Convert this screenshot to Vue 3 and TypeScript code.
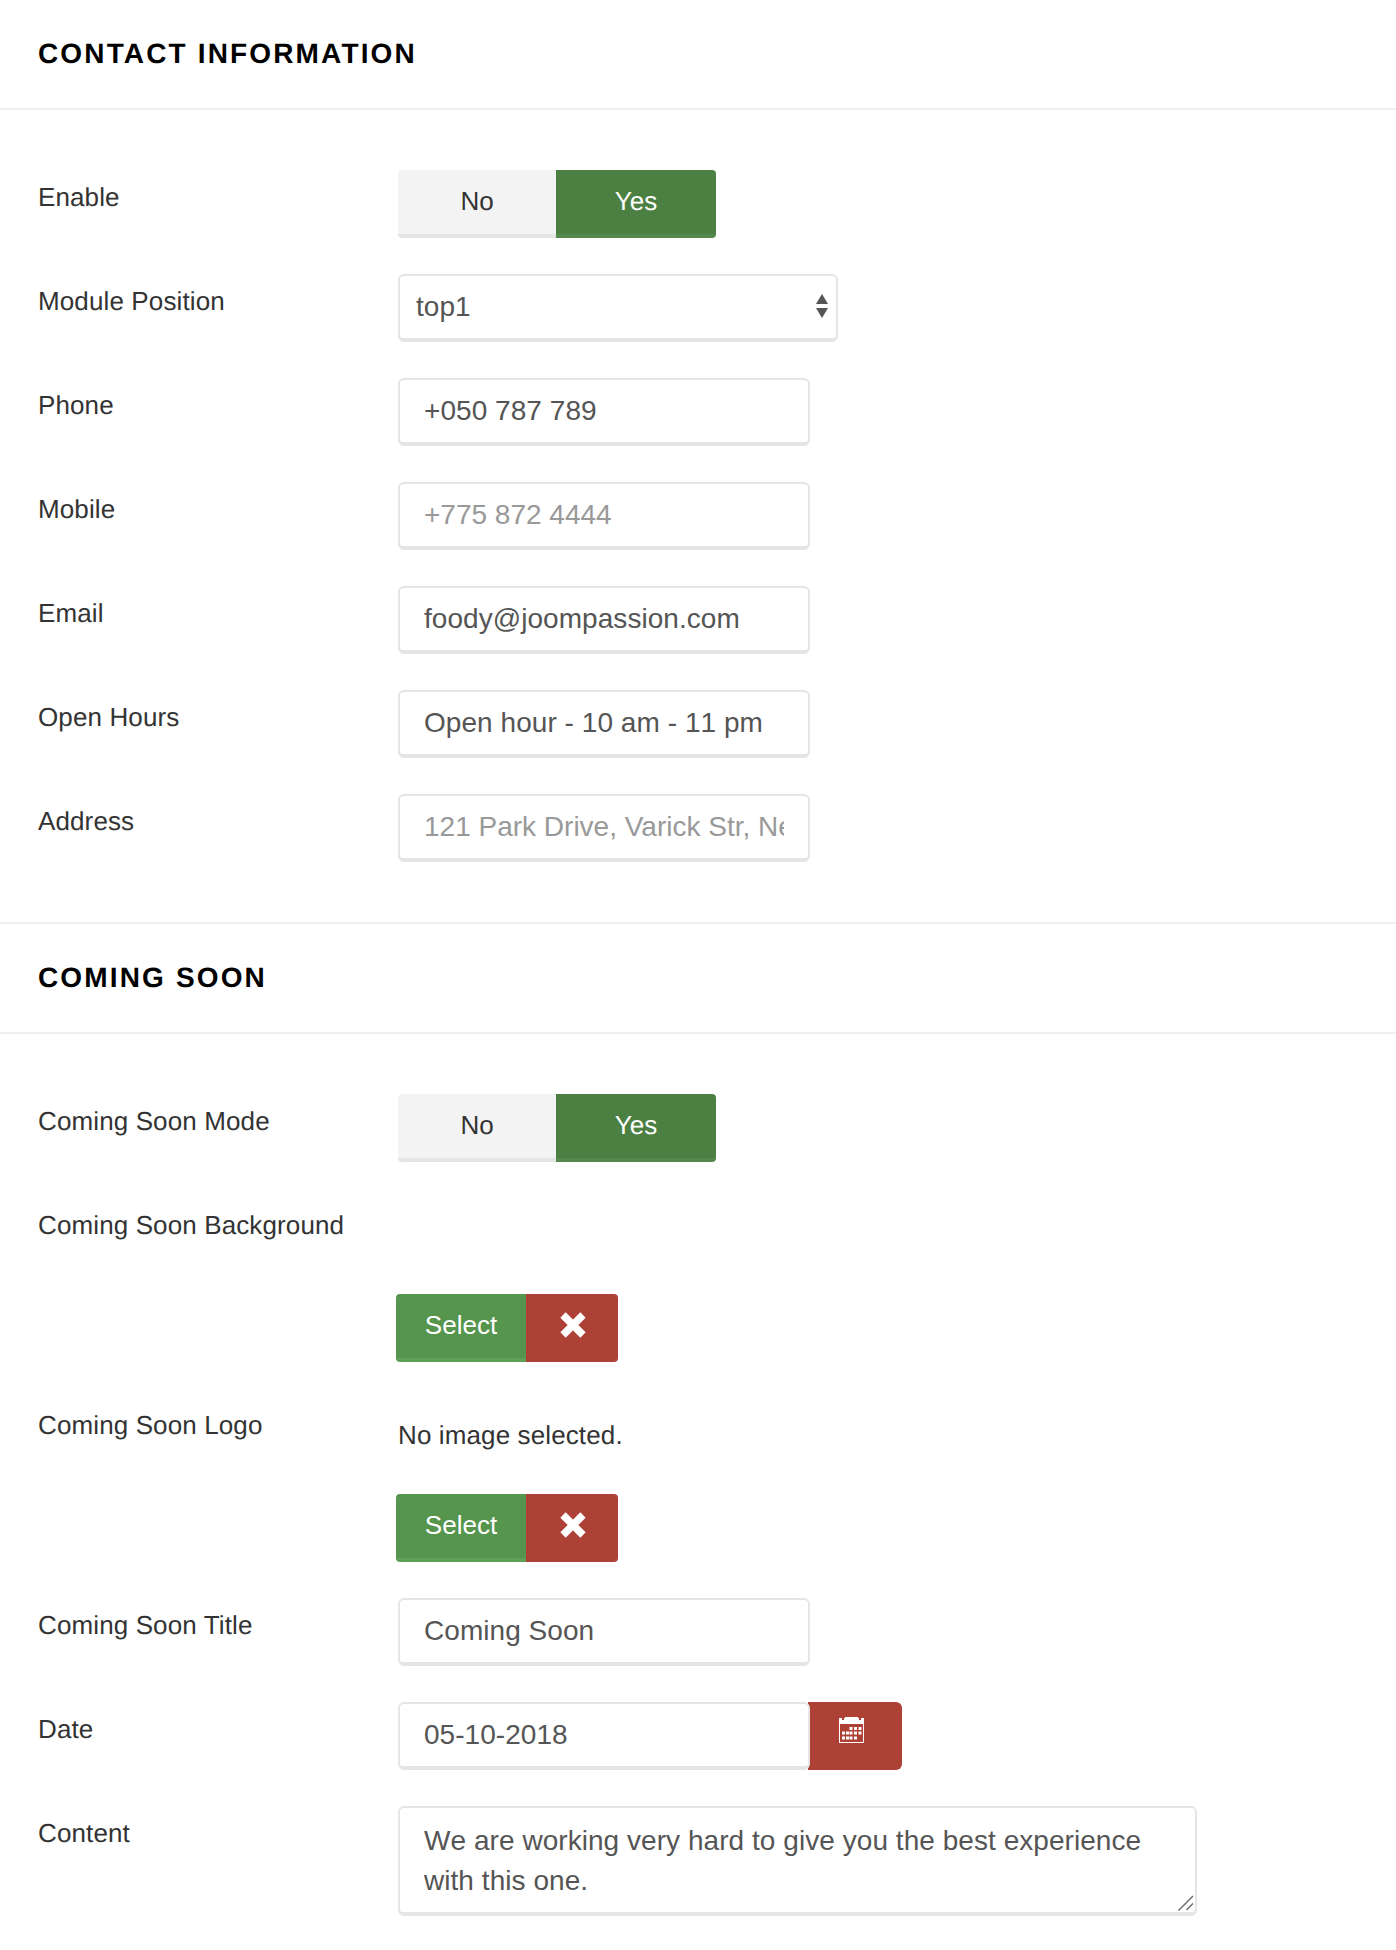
<script setup lang="ts">
interface Field { label: string; value?: string; placeholder?: string }
const contactFields: Field[] = [
  { label: 'Phone', value: '+050 787 789' },
  { label: 'Mobile', placeholder: '+775 872 4444' },
  { label: 'Email', value: 'foody@joompassion.com' },
  { label: 'Open Hours', value: 'Open hour - 10 am - 11 pm' },
  { label: 'Address', placeholder: '121 Park Drive, Varick Str, New York' },
]
const calendarCells: [number, number][] = [
  [10.5, 10], [15, 10], [19.5, 10],
  [3, 14.5], [7, 14.5], [10.5, 14.5], [15, 14.5], [19.5, 14.5],
  [3, 19.5], [7, 19.5], [10.5, 19.5], [15, 19.5],
]
</script>

<template>
  <main class="page">
    <section class="section">
      <h2 class="heading">CONTACT INFORMATION</h2>
      <div class="body">
        <div class="row">
          <label class="label">Enable</label>
          <div class="toggle"><span class="opt no">No</span><span class="opt yes">Yes</span></div>
        </div>
        <div class="row">
          <label class="label">Module Position</label>
          <div class="select-box">
            <select class="select"><option>top1</option></select>
            <svg class="arrows" width="12" height="24" viewBox="0 0 12 24">
              <path d="M6 0 12 10H0Z M0 14H12L6 24Z" fill="#555" />
            </svg>
          </div>
        </div>
        <div v-for="f in contactFields" :key="f.label" class="row">
          <label class="label">{{ f.label }}</label>
          <input class="input" type="text" :value="f.value" :placeholder="f.placeholder" />
        </div>
      </div>
    </section>

    <section class="section">
      <h2 class="heading">COMING SOON</h2>
      <div class="body last">
        <div class="row">
          <label class="label">Coming Soon Mode</label>
          <div class="toggle"><span class="opt no">No</span><span class="opt yes">Yes</span></div>
        </div>
        <div class="row">
          <label class="label">Coming Soon Background</label>
          <div class="media">
            <div class="preview"></div>
            <div class="media-btns">
              <button class="btn select-btn">Select</button>
              <button class="btn clear-btn" aria-label="Clear">
                <svg width="26" height="26" viewBox="0 0 26 26"><path d="M3 3 23 23M23 3 3 23" stroke="#fff" stroke-width="7.5" fill="none" /></svg>
              </button>
            </div>
          </div>
        </div>
        <div class="row">
          <label class="label">Coming Soon Logo</label>
          <div class="media">
            <div class="preview"><span class="no-image">No image selected.</span></div>
            <div class="media-btns">
              <button class="btn select-btn">Select</button>
              <button class="btn clear-btn" aria-label="Clear">
                <svg width="26" height="26" viewBox="0 0 26 26"><path d="M3 3 23 23M23 3 3 23" stroke="#fff" stroke-width="7.5" fill="none" /></svg>
              </button>
            </div>
          </div>
        </div>
        <div class="row">
          <label class="label">Coming Soon Title</label>
          <input class="input" type="text" value="Coming Soon" />
        </div>
        <div class="row">
          <label class="label">Date</label>
          <div class="date">
            <input class="input date-input" type="text" value="05-10-2018" />
            <button class="date-btn" aria-label="Calendar">
              <svg width="25" height="26" viewBox="0 0 25 26">
                <path fill="#fff" fill-rule="evenodd" d="M0 1H3V3H5V1H6V0H19V1H20V3H22V1H25V26H0ZM1 7V25H24V7Z" />
                <rect v-for="(c, i) in calendarCells" :key="i" :x="c[0]" :y="c[1]" width="3" height="3" fill="#fff" />
              </svg>
            </button>
          </div>
        </div>
        <div class="row">
          <label class="label">Content</label>
          <div class="textarea-box">
            <textarea class="textarea" rows="2">We are working very hard to give you the best experience with this one.</textarea>
            <svg class="grip" width="16" height="16" viewBox="0 0 16 16">
              <path d="M0.5 15.5 15 1M8.5 15 15 8.5" stroke="#666" stroke-width="1.4" fill="none" />
            </svg>
          </div>
        </div>
      </div>
    </section>
  </main>
</template>

<style scoped>
.page {
  width: 1396px;
  height: 1950px;
  background: #fff;
  font-family: "Liberation Sans", Arial, sans-serif;
  text-rendering: geometricPrecision;
  color: #333;
  overflow: hidden;
}
.section + .section { border-top: 2px solid #eee; }
.heading {
  margin: 0;
  height: 108px;
  padding-left: 38px;
  display: flex;
  align-items: center;
  font-size: 28px;
  font-weight: 700;
  letter-spacing: 2.15px;
  color: #000;
  border-bottom: 2px solid #eee;
  box-sizing: content-box;
}
.body { padding: 60px 38px 24px; }
.body.last { padding-bottom: 0; }
.row {
  display: flex;
  align-items: flex-start;
  margin-bottom: 36px;
}
.label {
  width: 360px;
  flex: none;
  font-size: 26px;
  line-height: 36px;
  padding-top: 9px;
  letter-spacing: 0.12px;
}
.toggle { display: flex; height: 68px; }
.opt {
  display: flex;
  align-items: center;
  justify-content: center;
  box-sizing: border-box;
  height: 68px;
  padding-bottom: 2px;
  font-size: 26px;
  border-bottom: 4px solid;
}
.no {
  width: 158px;
  background: #f3f3f3;
  border-color: #e5e5e5;
  border-radius: 4px 0 0 4px;
}
.yes {
  width: 160px;
  background: #4c7f42;
  border-color: #55884c;
  color: #fff;
  border-radius: 0 4px 4px 0;
}
.input, .select, .textarea {
  box-sizing: border-box;
  background: #fff;
  border: 2px solid #e5e5e5;
  border-bottom-width: 4px;
  border-radius: 6px;
  font-family: inherit;
  font-size: 28px;
  font-kerning: none;
  letter-spacing: 0.05px;
  color: #555;
  outline: none;
  margin: 0;
}
.input {
  display: block;
  width: 412px;
  height: 68px;
  padding: 0 24px;
}
.input::placeholder {
  color: #999;
  opacity: 1;
  font-kerning: normal;
  letter-spacing: 0;
}
.select-box { position: relative; width: 440px; }
.select {
  display: block;
  width: 440px;
  height: 68px;
  padding: 0 16px 2px;
  appearance: none;
  -webkit-appearance: none;
}
.arrows {
  position: absolute;
  right: 10px;
  top: 20px;
}
.media { margin-left: -2px; }
.preview {
  height: 96px;
  padding: 22px 0 0 2px;
  box-sizing: border-box;
}
.no-image { font-size: 26px; line-height: 30px; display: block; color: #333; letter-spacing: 0.12px; }
.media-btns { display: flex; }
.btn {
  height: 68px;
  border: 0;
  padding: 0;
  margin: 0;
  font-family: inherit;
  font-size: 26px;
  color: #fff;
  display: flex;
  align-items: center;
  justify-content: center;
  box-sizing: border-box;
}
.select-btn {
  width: 130px;
  background: #55954e;
  border-bottom: 4px solid #5fa058;
  border-radius: 4px 0 0 4px;
  padding-bottom: 2px;
}
.clear-btn {
  width: 92px;
  background: #ae4136;
  border-radius: 0 4px 4px 0;
  padding: 0 0 7px 2px;
}
.date { display: flex; }
.date-input { position: relative; z-index: 1; }
.date-btn {
  width: 94px;
  height: 68px;
  margin-left: -2px;
  border: 0;
  padding: 0 7px 12px 0;
  background: #ae4136;
  border-radius: 0 6px 6px 0;
  display: flex;
  align-items: center;
  justify-content: center;
}
.textarea-box { position: relative; width: 799px; height: 110px; }
.textarea {
  display: block;
  width: 799px;
  height: 110px;
  padding: 13px 24px 0;
  line-height: 40px;
  resize: none;
  overflow: hidden;
}
.grip {
  position: absolute;
  right: 3px;
  bottom: 5px;
}
</style>
